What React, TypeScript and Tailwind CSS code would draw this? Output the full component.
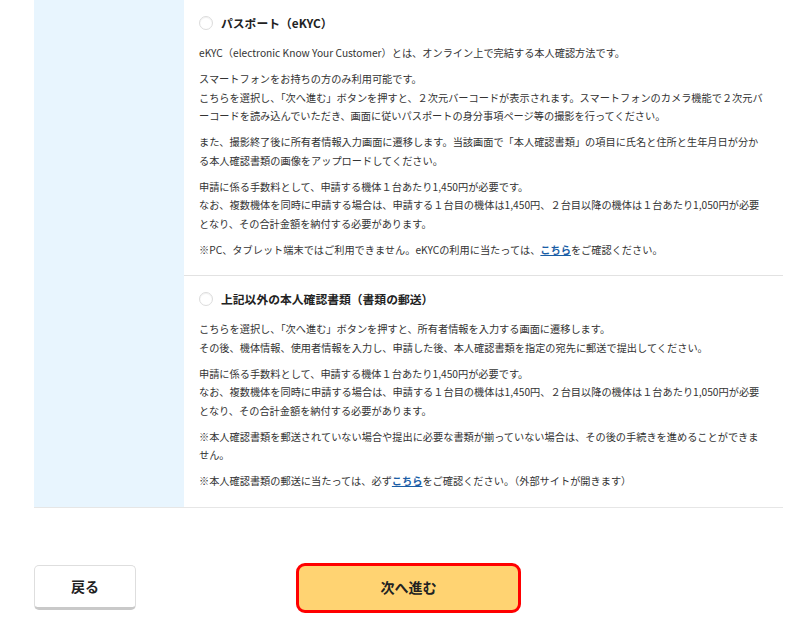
import React from "react";

const font = {
  fontFamily: '"Noto Sans CJK JP", "Noto Sans", sans-serif',
};

function Radio() {
  return (
    <span className="inline-block w-[14px] h-[14px] rounded-full border border-[#dcdcdc] bg-white shadow-[inset_0_1px_1px_rgba(0,0,0,0.06)] shrink-0" />
  );
}

function Title({ children }: { children: React.ReactNode }) {
  return (
    <div className="flex items-center gap-[8px] h-[18px]">
      <Radio />
      <span className="text-[11.8px] font-bold text-[#222] leading-[18px] whitespace-nowrap">
        {children}
      </span>
    </div>
  );
}

function Link({ children }: { children: React.ReactNode }) {
  return (
    <a href="#" className="text-[#1b5ea6] underline font-bold">
      {children}
    </a>
  );
}

function Fee() {
  return (
    <p>
      申請に係る手数料として、申請する機体１台あたり1,450円が必要です。
      <br />
      なお、複数機体を同時に申請する場合は、申請する１台目の機体は1,450円、２台目以降の機体は１台あたり1,050円が必要
      <br />
      となり、その合計金額を納付する必要があります。
    </p>
  );
}

export default function App() {
  return (
    <div className="w-[800px] h-[632px] bg-white overflow-hidden" style={font}>
      <div className="ml-[34px] w-[749px] flex border-b border-[#e6e6e6]">
        <div className="w-[150px] bg-[#e8f5fe] shrink-0" />
        <div className="flex-1 flex flex-col">
          <section className="pl-[15px] pr-[6px] pt-[14px] pb-[16px] border-b border-[#e2e2e2]">
            <Title>パスポート（eKYC）</Title>
            <div className="mt-[12px] flex flex-col gap-[7.5px] text-[10.2px] leading-[18.5px] text-[#333] whitespace-nowrap">
              <p>
                eKYC（electronic Know Your Customer）とは、オンライン上で完結する本人確認方法です。
              </p>
              <p>
                スマートフォンをお持ちの方のみ利用可能です。
                <br />
                こちらを選択し、「次へ進む」ボタンを押すと、２次元バーコードが表示されます。スマートフォンのカメラ機能で２次元バ
                <br />
                ーコードを読み込んでいただき、画面に従いパスポートの身分事項ページ等の撮影を行ってください。
              </p>
              <p>
                また、撮影終了後に所有者情報入力画面に遷移します。当該画面で「本人確認書類」の項目に氏名と住所と生年月日が分か
                <br />
                る本人確認書類の画像をアップロードしてください。
              </p>
              <Fee />
              <p>
                ※PC、タブレット端末ではご利用できません。eKYCの利用に当たっては、
                <Link>こちら</Link>
                をご確認ください。
              </p>
            </div>
          </section>
          <section className="pl-[15px] pr-[6px] pt-[14px] pb-[16px]">
            <Title>上記以外の本人確認書類（書類の郵送）</Title>
            <div className="mt-[12px] flex flex-col gap-[7.5px] text-[10.2px] leading-[18.5px] text-[#333] whitespace-nowrap">
              <p>
                こちらを選択し、「次へ進む」ボタンを押すと、所有者情報を入力する画面に遷移します。
                <br />
                その後、機体情報、使用者情報を入力し、申請した後、本人確認書類を指定の宛先に郵送で提出してください。
              </p>
              <Fee />
              <p>
                ※本人確認書類を郵送されていない場合や提出に必要な書類が揃っていない場合は、その後の手続きを進めることができま
                <br />
                せん。
              </p>
              <p>
                ※本人確認書類の郵送に当たっては、必ず<Link>こちら</Link>
                をご確認ください。（外部サイトが開きます）
              </p>
            </div>
          </section>
        </div>
      </div>

      <div className="mt-[55px] ml-[34px] flex items-center">
        <button className="w-[102px] h-[45px] bg-white border border-[#dedede] border-b-[3px] border-b-[#c9c9c9] rounded-[5px] text-[14px] font-bold text-[#222] flex items-center justify-center">
          戻る
        </button>
        <button className="ml-[160px] w-[225px] h-[50px] bg-[#ffd372] border-[3px] border-[#ff0000] rounded-[9px] text-[14px] font-bold text-[#222] flex items-center justify-center">
          次へ進む
        </button>
      </div>
    </div>
  );
}
